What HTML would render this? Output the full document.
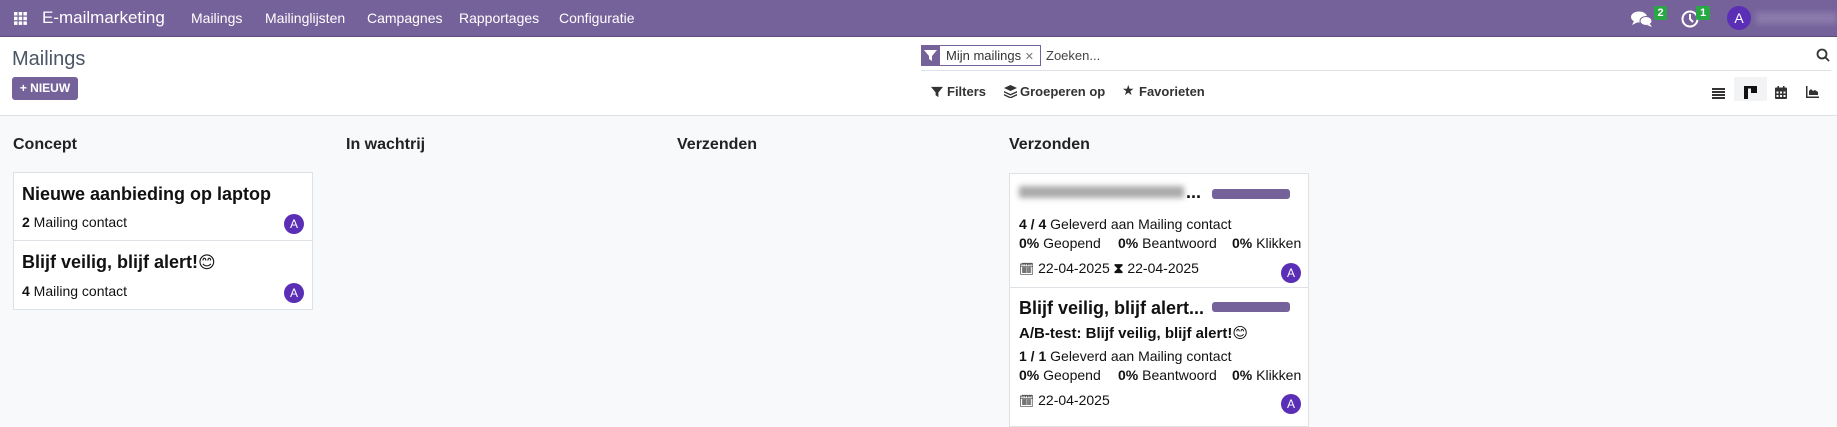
<!DOCTYPE html>
<html><head><meta charset="utf-8"><style>
*{box-sizing:border-box;margin:0;padding:0}
body{width:1837px;height:410px;overflow:hidden;font-family:"Liberation Sans","DejaVu Sans",sans-serif;font-size:14px;color:#111;background:#f8f9fa;position:relative}
.a{position:absolute;white-space:nowrap}
.nav{position:absolute;left:0;top:0;width:1837px;height:37px;background:#75629b;border-bottom:1px solid #5d4d7d;color:#fff}
.cp{position:absolute;left:0;top:37px;width:1837px;height:79px;background:#fff;border-bottom:1px solid #dee2e6}
.card{position:absolute;background:#fff;border:1px solid #dee2e6}
.ttl{font-size:18px;font-weight:bold;color:#111}
.av{position:absolute;width:20px;height:20px;border-radius:50%;background:#5b2fb5;color:#fff;font-size:12px;text-align:center;line-height:20px}
b{font-weight:bold}
.col{font-size:16px;font-weight:bold;color:#222}
</style></head><body>
<div class="nav">
 <svg class="a" style="left:14px;top:12px" width="13" height="13" viewBox="0 0 13 13" fill="#fff"><rect x="0" y="0" width="3.5" height="3.5"/><rect x="4.7" y="0" width="3.5" height="3.5"/><rect x="9.4" y="0" width="3.5" height="3.5"/><rect x="0" y="4.7" width="3.5" height="3.5"/><rect x="4.7" y="4.7" width="3.5" height="3.5"/><rect x="9.4" y="4.7" width="3.5" height="3.5"/><rect x="0" y="9.4" width="3.5" height="3.5"/><rect x="4.7" y="9.4" width="3.5" height="3.5"/><rect x="9.4" y="9.4" width="3.5" height="3.5"/></svg>
 <div class="a" style="left:42px;top:8px;font-size:17px">E-mailmarketing</div>
 <div class="a" style="left:191px;top:10px;font-size:14px">Mailings</div>
 <div class="a" style="left:265px;top:10px;font-size:14px">Mailinglijsten</div>
 <div class="a" style="left:367px;top:10px;font-size:14px">Campagnes</div>
 <div class="a" style="left:459px;top:10px;font-size:14px">Rapportages</div>
 <div class="a" style="left:559px;top:10px;font-size:14px">Configuratie</div>
 <svg class="a" style="left:1631px;top:11px" width="22" height="16" viewBox="0 0 22 16" fill="#fff"><ellipse cx="8" cy="6" rx="8" ry="5.5"/><path d="M3 10 L1 14 L7 11Z"/><ellipse cx="15" cy="10" rx="6" ry="4.5" stroke="#75629b" stroke-width="1"/><path d="M19 13 L21 16 L16 14Z"/></svg>
 <div class="a" style="left:1654px;top:6px;width:13px;height:14px;background:#28a745;border-radius:2px;font-size:11px;font-weight:bold;text-align:center;line-height:14px">2</div>
 <svg class="a" style="left:1681px;top:10px" width="18" height="18" viewBox="0 0 18 18" fill="none" stroke="#fff" stroke-width="2"><circle cx="9" cy="9" r="7.5"/><path d="M9 4v5l3 3"/></svg>
 <div class="a" style="left:1696px;top:6px;width:14px;height:14px;background:#28a745;border-radius:2px;font-size:11px;font-weight:bold;text-align:center;line-height:14px">1</div>
 <div class="a" style="left:1727px;top:6px;width:24px;height:24px;border-radius:50%;background:#5b2fb5;text-align:center;line-height:24px;font-size:14px">A</div>
 <div class="a" style="left:1756px;top:12px;width:81px;height:12px;background:#8a7aab;filter:blur(3px)"></div>
</div>
<div class="cp">
 <div class="a" style="left:12px;top:11px;font-size:20px;color:#4a5565">Mailings</div>
 <div class="a" style="left:12px;top:40px;width:66px;height:23px;background:#75629b;border-radius:3px;color:#fff;font-size:12px;font-weight:bold;line-height:23px;text-align:center">+ NIEUW</div>
 <div class="a" style="left:921px;top:8px;width:120px;height:21px;border:1px solid #75629b"></div>
 <div class="a" style="left:921px;top:8px;width:19px;height:21px;background:#75629b"></div>
 <svg class="a" style="left:924px;top:12px" width="13" height="13" viewBox="0 0 13 13" fill="#fff"><path d="M0 1h13L8 7v5L5 10V7Z"/></svg>
 <div class="a" style="left:946px;top:11px;font-size:13px;color:#333">Mijn mailings <span style="color:#777;font-size:11px">✕</span></div>
 <div class="a" style="left:1046px;top:11px;font-size:13px;color:#444">Zoeken...</div>
 <svg class="a" style="left:1816px;top:11px" width="14" height="14" viewBox="0 0 14 14" fill="none" stroke="#333" stroke-width="1.8"><circle cx="6" cy="6" r="4.5"/><path d="M9.3 9.3 13 13"/></svg>
 <div class="a" style="left:921px;top:33px;width:910px;height:1px;background:#dee2e6"></div>
 <svg class="a" style="left:931px;top:49px" width="12" height="12" viewBox="0 0 13 13" fill="#333"><path d="M0 1h13L8 7v5L5 10V7Z"/></svg>
 <div class="a" style="left:947px;top:47px;font-size:13px;font-weight:bold;color:#333">Filters</div>
 <svg class="a" style="left:1004px;top:48px" width="13" height="13" viewBox="0 0 13 13" fill="#333"><path d="M6.5 0 13 3 6.5 6 0 3Z"/><path d="M0 6 6.5 9 13 6v1.5L6.5 10.5 0 7.5Z"/><path d="M0 9 6.5 12 13 9v1.5L6.5 13.5 0 10.5Z"/></svg>
 <div class="a" style="left:1020px;top:47px;font-size:13px;font-weight:bold;color:#333">Groeperen op</div>
 <div class="a" style="left:1122px;top:45px;font-size:14px;color:#333">★</div>
 <div class="a" style="left:1139px;top:47px;font-size:13px;font-weight:bold;color:#333">Favorieten</div>
 <svg class="a" style="left:1712px;top:51px" width="13" height="11" viewBox="0 0 13 11" fill="#333"><rect y="0" width="13" height="2"/><rect y="3" width="13" height="2"/><rect y="6" width="13" height="2"/><rect y="9" width="13" height="2"/></svg>
 <div class="a" style="left:1734px;top:40px;width:33px;height:24px;background:#f1f3f5"></div>
 <svg class="a" style="left:1744px;top:49px" width="13" height="13" viewBox="0 0 13 13"><rect width="13" height="2.5" fill="#111"/><rect width="4" height="13" fill="#111"/><rect x="7" width="6" height="7" fill="#111"/></svg>
 <svg class="a" style="left:1775px;top:49px" width="12" height="13" viewBox="0 0 12 13" fill="#333"><rect y="1.5" width="12" height="11.5" rx="1"/><rect x="2.5" y="0" width="1.5" height="3"/><rect x="8" y="0" width="1.5" height="3"/><g fill="#fff"><rect x="1.5" y="5.5" width="2" height="2"/><rect x="5" y="5.5" width="2" height="2"/><rect x="8.5" y="5.5" width="2" height="2"/><rect x="1.5" y="9" width="2" height="2"/><rect x="5" y="9" width="2" height="2"/><rect x="8.5" y="9" width="2" height="2"/></g></svg>
 <svg class="a" style="left:1806px;top:49px" width="13" height="12" viewBox="0 0 13 12" fill="#333"><rect x="0" y="0" width="1.5" height="12"/><rect x="0" y="10.5" width="13" height="1.5"/><path d="M3 9V5l2-2 2 2 2-1 3 2v3Z"/></svg>
</div>
<div class="a col" style="left:13px;top:136px">Concept</div>
<div class="a col" style="left:346px;top:136px">In wachtrij</div>
<div class="a col" style="left:677px;top:136px">Verzenden</div>
<div class="a col" style="left:1009px;top:136px">Verzonden</div>

<div class="card" style="left:13px;top:172px;width:300px;height:69px">
 <div class="a ttl" style="left:8px;top:11px">Nieuwe aanbieding op laptop</div>
 <div class="a" style="left:8px;top:41px"><b>2</b> Mailing contact</div>
 <div class="av" style="left:270px;top:41px">A</div>
</div>
<div class="card" style="left:13px;top:240px;width:300px;height:70px">
 <div class="a ttl" style="left:8px;top:11px">Blijf veilig, blijf alert!<span style="font-size:17px">😊</span></div>
 <div class="a" style="left:8px;top:42px"><b>4</b> Mailing contact</div>
 <div class="av" style="left:270px;top:42px">A</div>
</div>

<div class="card" style="left:1009px;top:173px;width:300px;height:115px">
 <div class="a" style="left:9px;top:12px;width:165px;height:12px;background:#aaa;filter:blur(3px)"></div>
 <div class="a ttl" style="left:176px;top:8px">...</div>
 <div class="a" style="left:202px;top:15px;width:78px;height:10px;background:#75629b;border-radius:3px"></div>
 <div class="a" style="left:9px;top:42px"><b>4 / 4</b> Geleverd aan Mailing contact</div>
 <div class="a" style="left:9px;top:61px"><b>0%</b> Geopend</div>
 <div class="a" style="left:108px;top:61px"><b>0%</b> Beantwoord</div>
 <div class="a" style="left:222px;top:61px"><b>0%</b> Klikken</div>
 <div class="a" style="left:9px;top:86px"><span style="font-size:12px">🗓</span> 22-04-2025 <b>⧗</b> 22-04-2025</div>
 <div class="av" style="left:271px;top:89px">A</div>
</div>
<div class="card" style="left:1009px;top:287px;width:300px;height:140px">
 <div class="a ttl" style="left:9px;top:10px">Blijf veilig, blijf alert...</div>
 <div class="a" style="left:202px;top:14px;width:78px;height:10px;background:#75629b;border-radius:3px"></div>
 <div class="a" style="left:9px;top:36px;font-size:15px;font-weight:bold">A/B-test: Blijf veilig, blijf alert!😊</div>
 <div class="a" style="left:9px;top:60px"><b>1 / 1</b> Geleverd aan Mailing contact</div>
 <div class="a" style="left:9px;top:79px"><b>0%</b> Geopend</div>
 <div class="a" style="left:108px;top:79px"><b>0%</b> Beantwoord</div>
 <div class="a" style="left:222px;top:79px"><b>0%</b> Klikken</div>
 <div class="a" style="left:9px;top:104px"><span style="font-size:12px">🗓</span> 22-04-2025</div>
 <div class="av" style="left:271px;top:106px">A</div>
</div>
</body></html>
